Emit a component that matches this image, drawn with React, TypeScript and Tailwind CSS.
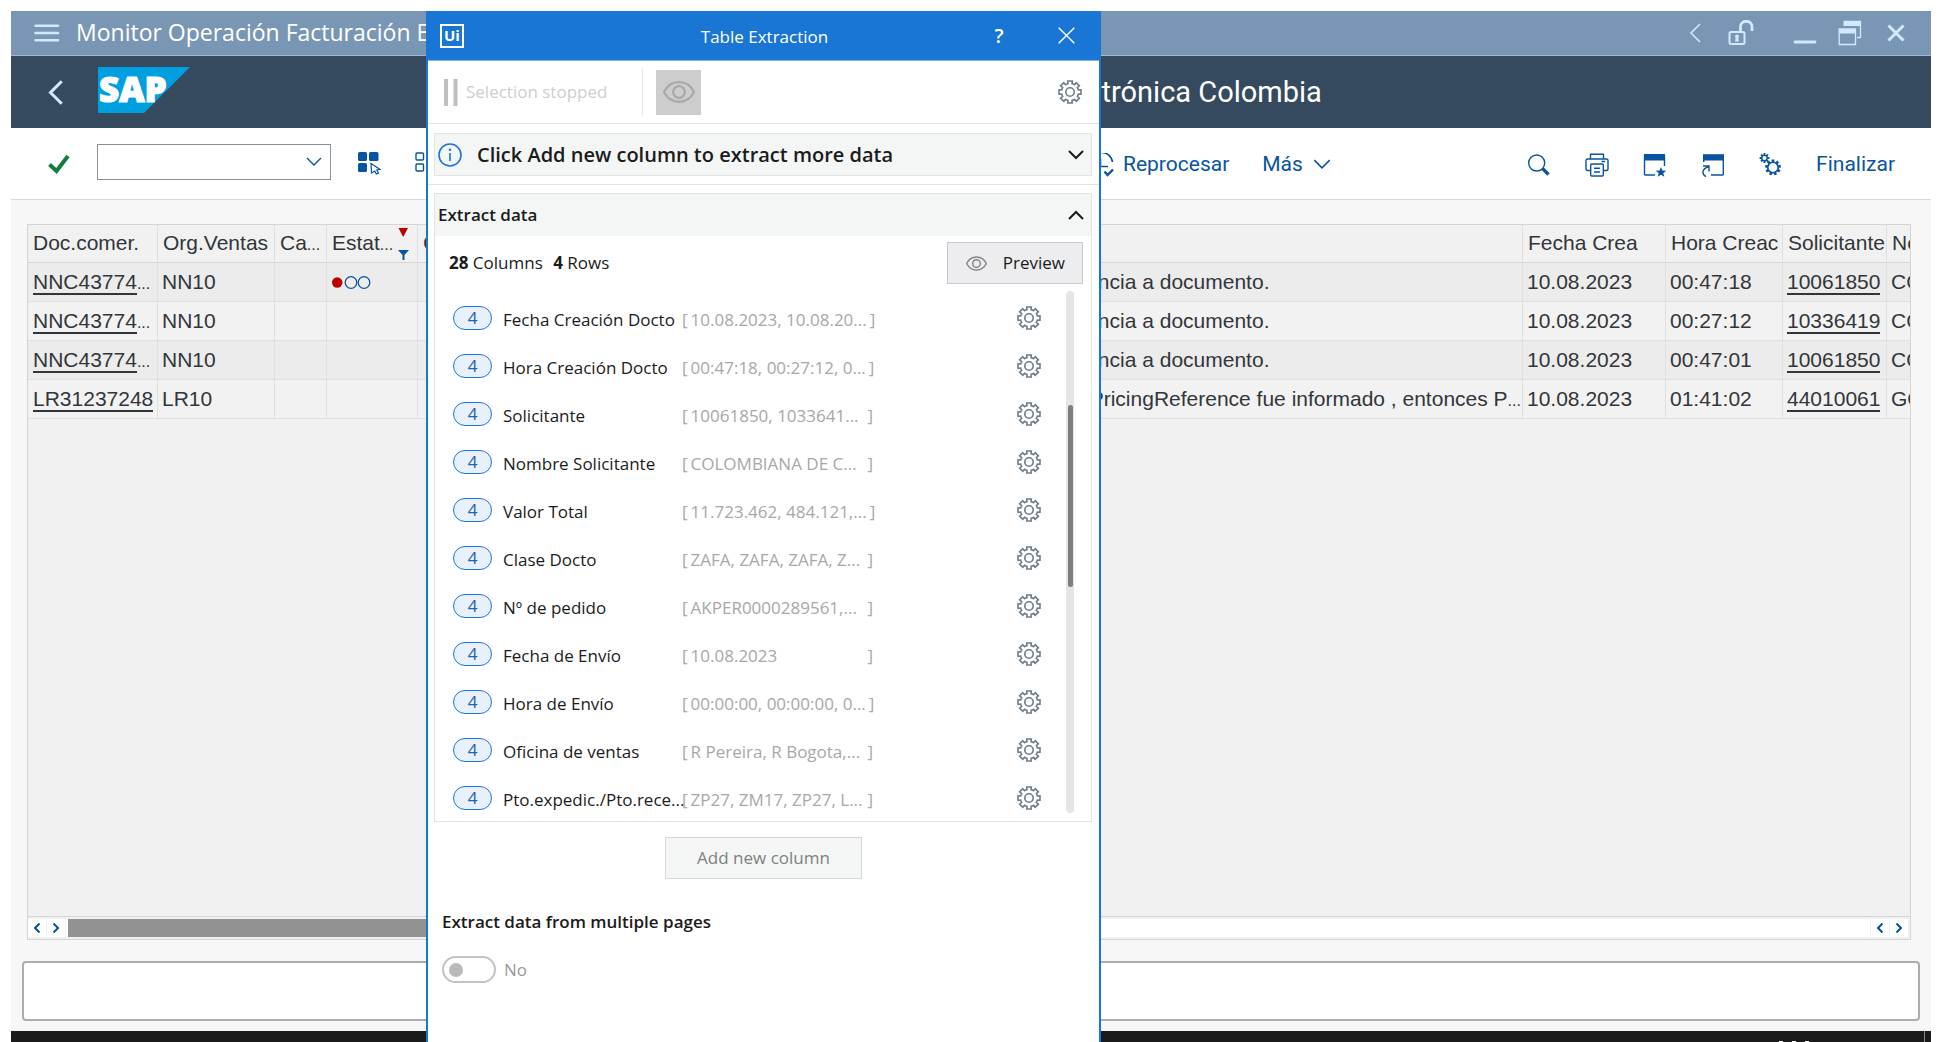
import React, { useState } from "react";
import type { ReactNode } from "react";

function gearPath(cx: number, cy: number, teeth: number, outer: number, inner: number, halfTop: number, halfBase: number) {
  const step = (Math.PI * 2) / teeth;
  const at = (r: number, a: number) => `${(cx + r * Math.sin(a)).toFixed(2)} ${(cy - r * Math.cos(a)).toFixed(2)}`;
  let d = "";
  for (let i = 0; i < teeth; i++) {
    const a = i * step;
    d += `${i === 0 ? "M" : "A" + inner + " " + inner + " 0 0 1 "}${at(inner, a - halfBase)}`;
    d += `L${at(outer, a - halfTop)}L${at(outer, a + halfTop)}L${at(inner, a + halfBase)}`;
  }
  return d + `A${inner} ${inner} 0 0 1 ${at(inner, -halfBase)}Z`;
}

const outlineGear = gearPath(12, 12, 8, 11.2, 8.6, 0.2, 0.24);
const bigGear = gearPath(14, 14.5, 9, 8, 6, 0.17, 0.22);
const smallGear = gearPath(5.5, 5, 8, 5, 3.4, 0.2, 0.28);

const Gear = () => (
  <svg viewBox="0 0 24 24" className="size-6 text-[#6f7d8a]" fill="none" stroke="currentColor" strokeWidth="1.6">
    <path d={outlineGear} strokeLinejoin="miter" />
    <circle cx="12" cy="12" r="4.2" />
  </svg>
);

const Eye = ({ className }: { className: string }) => (
  <svg viewBox="0 0 32 22" className={className} fill="none" stroke="currentColor" strokeWidth="2.200">
    <path d="M1 11C4 5 9.500 1.200 16 1.200S28 5 31 11C28 17 22.500 20.800 16 20.800S4 17 1 11Z" />
    <circle cx="16" cy="11" r="5.800" />
  </svg>
);

const Chevron = ({ dir, className, width = 2 }: { dir: "up" | "down" | "left" | "right"; className: string; width?: number }) => {
  const shapes = {
    up: { box: "0 0 16 10", d: "M1 9L8 2L15 9" },
    down: { box: "0 0 16 10", d: "M1 1L8 8L15 1" },
    left: { box: "0 0 12 20", d: "M11 1L2 10L11 19" },
    right: { box: "0 0 12 20", d: "M1 1L10 10L1 19" },
  };
  return (
    <svg viewBox={shapes[dir].box} className={className} fill="none" stroke="currentColor" strokeWidth={width}>
      <path d={shapes[dir].d} />
    </svg>
  );
};

const IconButton = ({ label, children, className = "" }: { label: string; children: ReactNode; className?: string }) => (
  <button type="button" aria-label={label} className={`flex shrink-0 items-center justify-center ${className}`}>
    {children}
  </button>
);

const Dots = () => <span className="text-base leading-none">...</span>;

function TitleBar() {
  return (
    <header className="flex h-[45px] shrink-0 items-center border-b border-[#a3b8ce] bg-[#7a96b5] pr-[26px] pl-[23px] text-[#d1e8ff]">
      <IconButton label="Menú">
        <svg viewBox="0 0 26 18" className="h-[18px] w-[26px]" stroke="currentColor" strokeWidth="2.600" strokeLinecap="round">
          <path d="M1.500 1.700H24M1.500 9H24M1.500 16.300H24" />
        </svg>
      </IconButton>
      <h2 className="ml-[16px] flex-1 pb-[2px] font-['Open_Sans',sans-serif] text-[23px] leading-8 whitespace-nowrap text-white">Monitor Operación Facturación Electrónica Colombia</h2>
      <div className="flex items-center">
        <IconButton label="Anterior">
          <Chevron dir="left" className="h-5 w-3" width={1.6} />
        </IconButton>
        <IconButton label="Desbloquear" className="ml-[27px]">
          <svg viewBox="0 0 26 26" className="size-[26px]" fill="none" stroke="currentColor" strokeWidth="2">
            <rect x="1.500" y="12" width="15" height="12" rx="1.500" />
            <path d="M12.500 12V6.500a5.500 5 0 0 1 11.500 0V11" strokeWidth="2.800" />
            <circle cx="9" cy="16.300" r="1.900" fill="currentColor" stroke="none" />
            <path d="M8 16.500h2l1 5H7z" fill="currentColor" stroke="none" />
          </svg>
        </IconButton>
        <IconButton label="Minimizar" className="ml-[39px]">
          <svg viewBox="0 0 24 24" className="size-6" stroke="currentColor" strokeWidth="2.800" strokeLinecap="round">
            <path d="M2 21H22" />
          </svg>
        </IconButton>
        <IconButton label="Restaurar" className="ml-[21px]">
          <svg viewBox="0 0 24 26" className="h-[26px] w-6" fill="none" stroke="currentColor" strokeWidth="1.300">
            <path d="M6 1.500H22.500V17.500H19M1.200 9H17.500V24.500H1.200Z" />
            <path d="M5.500 1H23V6H5.500ZM1 9H18V13.500H1Z" fill="currentColor" stroke="none" />
          </svg>
        </IconButton>
        <IconButton label="Cerrar" className="ml-[25px]">
          <svg viewBox="0 0 18 18" className="size-[18px]" stroke="currentColor" strokeWidth="3">
            <path d="M1.500 1.500L16.500 16.500M16.500 1.500L1.500 16.500" />
          </svg>
        </IconButton>
      </div>
    </header>
  );
}

function AppHeader() {
  return (
    <div className="flex h-[72px] shrink-0 items-center bg-[#354a5f] pl-[37px]">
      <IconButton label="Atrás" className="text-[#d1e8ff]">
        <Chevron dir="left" className="h-[25px] w-[15px]" width={2.4} />
      </IconButton>
      <svg viewBox="0 0 92 46" className="mb-1 ml-[35px] h-[46px] w-[92px] shrink-0" role="img" aria-label="SAP">
        <path d="M0 0H92L46 46H0Z" fill="#009fdf" />
        <text x="1" y="35" fill="#fff" stroke="#fff" strokeWidth="1.200" fontFamily="Noto Sans, sans-serif" fontWeight="900" fontSize="35">SAP</text>
      </svg>
      <h1 className="flex-1 pr-[157px] text-center font-['Roboto',sans-serif] text-[29px] leading-10 whitespace-nowrap text-white">
        Monitor Operación Facturación Electrónica Colombia
      </h1>
    </div>
  );
}

function Toolbar() {
  return (
    <div className="flex h-[72px] shrink-0 items-center border-b border-[#d9d9d9] bg-white pr-9 pl-[37px] font-['Roboto',sans-serif] text-[21px] text-[#0854a0]">
      <IconButton label="Aceptar">
        <svg viewBox="0 0 22 20" className="h-5 w-[22px]" fill="none" stroke="#107e3e" strokeWidth="4">
          <path d="M1.500 10.500L8.500 17L20 2" />
        </svg>
      </IconButton>
      <div className="mb-[3px] ml-[27px] flex h-9 w-[234px] shrink-0 items-center border border-[#89919a] bg-white pr-[7px]">
        <input aria-label="Comando" className="h-full min-w-0 flex-1 px-2 text-lg text-[#32363a] outline-none" />
        <IconButton label="Historial de comandos">
          <Chevron dir="down" className="h-[10px] w-[18px]" width={1.4} />
        </IconButton>
      </div>
      <IconButton label="Seleccionar todo" className="ml-[27px]">
        <svg viewBox="0 0 24 23" className="h-[23px] w-6" fill="currentColor">
          <rect width="9" height="9" rx="1.500" />
          <rect x="11" width="9.500" height="9" rx="1.500" />
          <rect y="11" width="9" height="9" rx="1.500" />
          <path d="M13 11.500L22 17.500L18.800 18L20.500 21.200L18.300 22L16.800 19L13.500 21Z" fill="#fff" stroke="currentColor" strokeWidth="1.200" />
        </svg>
      </IconButton>
      <IconButton label="Anular selección" className="ml-[33px]">
        <svg viewBox="0 0 24 23" className="h-[23px] w-6" fill="none" stroke="currentColor" strokeWidth="1.400">
          <rect x="1" y="1" width="7.500" height="7" rx="1" />
          <rect x="12" y="1" width="7.500" height="7" rx="1" />
          <rect x="1" y="12" width="7.500" height="7" rx="1" />
          <rect x="12" y="12" width="7.500" height="7" rx="1" />
        </svg>
      </IconButton>
      <button type="button" className="mt-[2px] ml-[649px] flex shrink-0 items-center gap-[9px]">
        <svg viewBox="0 0 26 24" className="h-6 w-[26px]" fill="none" stroke="currentColor" strokeWidth="1.600">
          <path d="M2 12.500V12A11 10.800 0 0 1 24.500 9M12.500 5.500V13.500H20" />
          <path d="M4 17.500A11 10.800 0 0 0 13 22.800" />
          <path d="M16.500 18.500L19.500 22L25 16.500" strokeWidth="2.400" />
        </svg>
        Reprocesar
      </button>
      <button type="button" className="mt-[2px] ml-[33px] flex shrink-0 items-center gap-[10px]">
        Más
        <Chevron dir="down" className="h-[11px] w-[18px]" width={1.4} />
      </button>
      <div className="mt-[2px] ml-auto flex items-center">
        <IconButton label="Buscar">
          <svg viewBox="0 0 24 24" className="size-6" fill="none" stroke="currentColor" strokeWidth="1.400">
            <circle cx="9.700" cy="10" r="8" />
            <path d="M15.500 15.500L21.500 21.500" strokeWidth="3.200" />
          </svg>
        </IconButton>
        <IconButton label="Imprimir" className="ml-[34px]">
          <svg viewBox="0 0 24 24" className="size-6" fill="none" stroke="currentColor" strokeWidth="1.400">
            <path d="M5.500 5.500V1.200H18.500V5.500M5.500 17.500H2.500A1.500 1.500 0 0 1 1 16V7.500A1.500 1.500 0 0 1 2.500 6H21.500A1.500 1.500 0 0 1 23 7.500V16A1.500 1.500 0 0 1 21.500 17.500H18.500" />
            <rect x="5.700" y="11" width="12.600" height="12" rx="1" />
            <path d="M9 15.200H15M9 19H15M16.500 8.500H20" />
          </svg>
        </IconButton>
        <IconButton label="Crear favorito" className="ml-[34px]">
          <svg viewBox="0 0 24 24" className="size-6" fill="none" stroke="currentColor" strokeWidth="1.400">
            <path d="M12 22H2.500A1 1 0 0 1 1.500 21V2.500A1 1 0 0 1 2.500 1.700H20.500A1 1 0 0 1 21.500 2.500V13" />
            <path d="M1 1.200H22V7.500H1Z" fill="currentColor" stroke="none" />
            <path d="M18 14l1.400 3.500 3.900.2-3 2.400 1 3.700-3.300-2-3.300 2 1-3.700-3-2.400 3.900-.2z" fill="currentColor" stroke="none" />
          </svg>
        </IconButton>
        <IconButton label="Abrir ventana" className="ml-[34px]">
          <svg viewBox="0 0 24 24" className="size-6" fill="none" stroke="currentColor" strokeWidth="1.400">
            <path d="M10 22H21.500A1 1 0 0 0 22.300 21V2M2.700 9V2" />
            <path d="M2 1.200H23V7.500H2Z" fill="currentColor" stroke="none" />
            <path d="M5 23.500C.2 21 1 15.500 7.500 14M2 13H8V18.500" />
          </svg>
        </IconButton>
        <IconButton label="Configuración" className="ml-[34px]">
          <svg viewBox="0 0 24 24" className="size-6" fill="currentColor" fillRule="evenodd">
            <path d={bigGear + "M9.600 14.500a4.400 4.400 0 1 0 8.800 0a4.400 4.400 0 1 0-8.800 0Z"} />
            <path d={smallGear + "M3.500 5a2 2 0 1 0 4 0a2 2 0 1 0-4 0Z"} />
          </svg>
        </IconButton>
        <button type="button" className="ml-[33px]">
          Finalizar
        </button>
      </div>
    </div>
  );
}

type Row = { doc: string; cut: boolean; org: string; status: boolean; message: string; messageCut: boolean; time: string; customer: string; name: string };

const rows: Row[] = [
  { doc: "NNC43774", cut: true, org: "NN10", status: true, message: "referencia a documento.", messageCut: false, time: "00:47:18", customer: "10061850", name: "COLOMBIANA" },
  { doc: "NNC43774", cut: true, org: "NN10", status: false, message: "referencia a documento.", messageCut: false, time: "00:27:12", customer: "10336419", name: "COLOMBIANA" },
  { doc: "NNC43774", cut: true, org: "NN10", status: false, message: "referencia a documento.", messageCut: false, time: "00:47:01", customer: "10061850", name: "COLOMBIANA" },
  { doc: "LR31237248", cut: false, org: "LR10", status: false, message: "Si el PricingReference fue informado , entonces P", messageCut: true, time: "01:41:02", customer: "44010061", name: "GONZALEZ" },
];

const th = "h-[38px] overflow-hidden border-r border-b border-r-[#dfdfdf] border-b-[#d4d4d4] pb-[2px] pl-[5px] text-left font-normal whitespace-nowrap";
const td = "h-[39px] overflow-hidden border-r border-b border-[#e0e0e0] pl-1 whitespace-nowrap";
const link = "border-b-2 border-[#32363a] leading-none";

function ScrollButton({ dir }: { dir: "left" | "right" }) {
  return (
    <IconButton label={dir === "left" ? "Desplazar a la izquierda" : "Desplazar a la derecha"} className="h-[18px] w-[18px] bg-white text-[#0854a0]">
      <Chevron dir={dir} className="h-[10px] w-[6px]" width={4} />
    </IconButton>
  );
}

function DocumentGrid() {
  return (
    <section className="mt-6 mr-5 ml-4 flex min-h-0 flex-1 flex-col border border-[#d4d4d4] bg-[#f1f1f1]">
      <div className="min-h-0 flex-1 overflow-hidden">
        <table className="w-full table-fixed border-separate border-spacing-0 font-['Liberation_Sans',Arial,sans-serif] text-[21px] leading-7 text-[#32363a]">
          <colgroup>
            <col className="w-[130px]" />
            <col className="w-[117px]" />
            <col className="w-[52px]" />
            <col className="w-[91px]" />
            <col />
            <col className="w-[484px]" />
            <col className="w-[143px]" />
            <col className="w-[117px]" />
            <col className="w-[104px]" />
            <col className="w-[23px]" />
          </colgroup>
          <thead>
            <tr>
              <th className={th}>Doc.comer.</th>
              <th className={th}>Org.Ventas</th>
              <th className={th}>Ca<Dots /></th>
              <th className={th}>
                <div className="flex items-center">
                  <span className="flex-1">Estat<Dots /></span>
                  <svg viewBox="0 0 11 34" className="mr-2 h-[34px] w-[11px] shrink-0">
                    <path d="M.500 2H10L5.200 11Z" fill="#bb0000" />
                    <path d="M0 24H11L6.500 29V34H4.500V29Z" fill="#0854a0" />
                  </svg>
                </div>
              </th>
              <th className={th}>Canal</th>
              <th className={th}></th>
              <th className={th}>Fecha Crea</th>
              <th className={th}>Hora Creac</th>
              <th className={th}>Solicitante</th>
              <th className={th + " border-r-0"}>Nombre</th>
            </tr>
          </thead>
          <tbody>
            {rows.map((r, i) => (
              <tr key={i} className="odd:bg-[#ececec] even:bg-[#f2f2f2]">
                <td className={td}>
                  <a href="#" className={link + " ml-px"}>{r.doc}</a>
                  {r.cut && <Dots />}
                </td>
                <td className={td}>{r.org}</td>
                <td className={td}></td>
                <td className={td}>
                  {r.status && (
                    <svg viewBox="0 0 39 14" className="ml-px h-[14px] w-[39px]" role="img" aria-label="Estado rojo">
                      <circle cx="5.200" cy="7.500" r="5.200" fill="#bb0000" />
                      <circle cx="19" cy="7.500" r="5.800" fill="none" stroke="#0854a0" strokeWidth="1.300" />
                      <circle cx="32" cy="7.500" r="5.800" fill="none" stroke="#0854a0" strokeWidth="1.300" />
                    </svg>
                  )}
                </td>
                <td className={td}></td>
                <td className={td}>
                  {r.message}
                  {r.messageCut && <Dots />}
                </td>
                <td className={td}>10.08.2023</td>
                <td className={td}>{r.time}</td>
                <td className={td}>
                  <a href="#" className={link}>{r.customer}</a>
                </td>
                <td className={td + " border-r-0"}>{r.name}</td>
              </tr>
            ))}
          </tbody>
        </table>
      </div>
      <div className="flex h-[23px] shrink-0 items-center gap-px border-t border-[#d4d4d4] pr-0.5">
        <ScrollButton dir="left" />
        <ScrollButton dir="right" />
        <div className="h-[18px] flex-1 bg-white pl-0.5">
          <div className="h-full w-1/2 bg-[#929292]"></div>
        </div>
        <ScrollButton dir="left" />
        <ScrollButton dir="right" />
      </div>
    </section>
  );
}

const extracted: [string, string][] = [
  ["Fecha Creación Docto", "10.08.2023, 10.08.20..."],
  ["Hora Creación Docto", "00:47:18, 00:27:12, 0..."],
  ["Solicitante", "10061850, 1033641..."],
  ["Nombre Solicitante", "COLOMBIANA DE C..."],
  ["Valor Total", "11.723.462, 484.121,..."],
  ["Clase Docto", "ZAFA, ZAFA, ZAFA, Z..."],
  ["Nº de pedido", "AKPER0000289561,..."],
  ["Fecha de Envío", "10.08.2023"],
  ["Hora de Envío", "00:00:00, 00:00:00, 0..."],
  ["Oficina de ventas", "R Pereira, R Bogota,..."],
  ["Pto.expedic./Pto.rece...", "ZP27, ZM17, ZP27, L..."],
];

function ExtractionDialog() {
  const [multi, setMulti] = useState(false);
  return (
    <div role="dialog" aria-label="Table Extraction" className="absolute top-[11px] bottom-0 left-[426px] w-[675px] overflow-hidden border-x-2 border-[#1976d4] bg-white font-['Open_Sans',sans-serif] text-[17px] leading-6 text-[#1b1b1b]">
      <div className="flex h-[50px] items-center border-b border-[#83b5e6] bg-[#1976d4] pr-6 pl-3 text-white">
        <span className="flex size-6 items-center justify-center border-2 border-white text-[15px] leading-none font-bold">Ui</span>
        <h2 className="flex-1 pt-[2px] pl-[76px] text-center">Table Extraction</h2>
        <button type="button" aria-label="Help" className="w-5 text-xl font-semibold">?</button>
        <IconButton label="Close" className="ml-[49px]">
          <svg viewBox="0 0 17 17" className="size-[17px]" stroke="currentColor" strokeWidth="1.400">
            <path d="M.700 .700L16.300 16.300M16.300 .700L.700 16.300" />
          </svg>
        </IconButton>
      </div>
      <div className="flex h-[63px] items-center border-b border-[#e3e3e3] pr-[17px] pl-4">
        <button type="button" disabled className="flex items-center gap-2 text-[#cecece]">
          <svg viewBox="0 0 14 27" className="h-[27px] w-[14px]" fill="#c0c0c0">
            <path d="M0 0H4V27H0ZM9.500 0H13.500V27H9.500Z" />
          </svg>
          Selection stopped
        </button>
        <span className="ml-[35px] h-12 w-px bg-[#e8e8e8]"></span>
        <IconButton label="Highlight" className="ml-[13px] size-[45px] bg-[#cdcdcd] text-[#a9a9a9]">
          <Eye className="h-[22px] w-8" />
        </IconButton>
        <IconButton label="Settings" className="ml-auto">
          <Gear />
        </IconButton>
      </div>

      <div className="border-b border-[#e3e3e3] pt-[9px] pr-[7px] pb-2 pl-[6px]">
        <button type="button" className="flex h-[43px] w-full items-center border border-[#e2e4e4] bg-[#f4f6f6] pr-[7px] pl-[3px] text-left text-xl font-semibold">
          <svg viewBox="0 0 24 24" className="size-6 shrink-0" fill="none" stroke="#1a73e0" strokeWidth="1.600">
            <circle cx="12" cy="12" r="11" />
            <path d="M12 10V18" />
            <circle cx="12" cy="6.800" r="1.200" fill="#1a73e0" stroke="none" />
          </svg>
          <span className="flex-1 pl-[15px]">Click Add new column to extract more data</span>
          <Chevron dir="down" className="h-[10px] w-4" />
        </button>
      </div>

      <section className="mt-2 mr-[7px] ml-[6px] border border-[#e2e4e4]">
        <button type="button" className="flex h-[42px] w-full items-center justify-between bg-[#f4f6f6] pr-[7px] pl-[3px] text-left font-semibold">
          Extract data
          <Chevron dir="up" className="h-[10px] w-4" />
        </button>
        <div className="mt-[6px] flex items-center pr-2 pl-[14px]">
          <p className="flex-1">
            <b>28</b> Columns <b className="ml-[6px]">4</b> Rows
          </p>
          <button type="button" className="flex h-[42px] items-center gap-[16px] border border-[#c8cacd] bg-[#ededf0] pr-[17px] pl-[18px]">
            <Eye className="h-[15px] w-[21px] text-[#858585]" />
            Preview
          </button>
        </div>
        <div className="mt-[7px] flex pr-[17px] pb-2 pl-[18px]">
          <ul className="flex flex-1 flex-col gap-6 pt-[15px] pb-[3px]">
            {extracted.map(([name, sample]) => (
              <li key={name} className="flex h-6 items-center">
                <span className="flex h-6 w-[39px] shrink-0 items-center justify-center rounded-full border border-[#1976d4] bg-[#e8f0fb] text-[#1c62b4]">4</span>
                <span className="w-[181px] shrink-0 pt-[3px] pl-[11px] whitespace-nowrap">{name}</span>
                <span className="ml-[9px] flex w-[191px] shrink-0 gap-[3px] pt-[3px] whitespace-nowrap text-[#a8a8a8]">
                  <span>[</span>
                  <span className="flex-1">{sample}</span>
                  <span>]</span>
                </span>
                <IconButton label={"Settings for " + name} className="mr-[25px] ml-auto">
                  <Gear />
                </IconButton>
              </li>
            ))}
          </ul>
          <div className="w-2 rounded-full bg-[#e4e5e7] pt-[114px]">
            <div className="mx-auto h-[182px] w-[5px] rounded-full bg-[#7e7e7e]"></div>
          </div>
        </div>
      </section>

      <div className="mt-[15px] flex justify-center">
        <button type="button" disabled className="h-[42px] w-[197px] border border-[#d6d6d6] bg-[#f4f6f6] text-[#808080]">
          Add new column
        </button>
      </div>
      <div className="px-[14px]">
        <h3 className="mt-[31px] font-semibold">Extract data from multiple pages</h3>
        <label className="mt-[22px] flex items-center gap-2 text-[#999999]">
          <input
            type="checkbox"
            role="switch"
            checked={multi}
            onChange={(e) => setMulti(e.target.checked)}
            className="flex h-[27px] w-[54px] appearance-none items-center rounded-full border-2 border-[#c2c3c4] px-[5px] before:size-[14px] before:rounded-full before:bg-[#b9babb] checked:justify-end"
          />
          {multi ? "Yes" : "No"}
        </label>
      </div>
    </div>
  );
}

export default function App() {
  return (
    <div className="relative flex h-screen flex-col overflow-hidden bg-white px-[11px] pt-[11px]">
      <div className="flex min-h-0 flex-1 flex-col bg-[#f7f7f7]">
        <TitleBar />
        <AppHeader />
        <Toolbar />
        <DocumentGrid />
        <div role="status" className="mx-[11px] mt-[21px] mb-[10px] h-[60px] shrink-0 rounded border-2 border-[#adadad] bg-white"></div>
      </div>
      <div className="flex h-[11px] shrink-0 items-end justify-end bg-[#1b1b1b] pr-[6px]">
        <div className="mr-[115px] flex gap-[9px]">
          <span className="h-px w-1 bg-white"></span>
          <span className="h-px w-1 bg-white"></span>
          <span className="h-px w-1 bg-white"></span>
        </div>
        <span className="h-full w-px bg-[#8a8a8a]"></span>
      </div>
      <ExtractionDialog />
    </div>
  );
}
